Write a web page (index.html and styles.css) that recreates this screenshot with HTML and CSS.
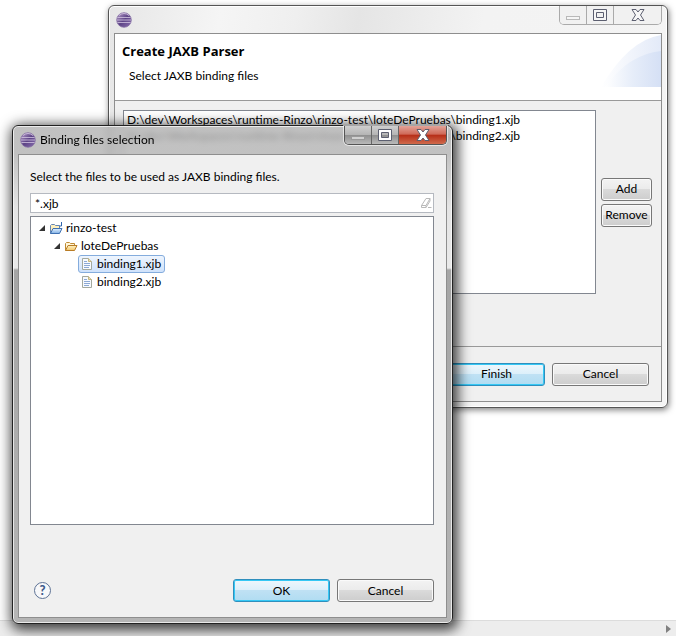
FILE: index.html
```html
<!DOCTYPE html>
<html lang="en">
<head>
<meta charset="utf-8">
<title>Create JAXB Parser</title>
<link rel="stylesheet" href="styles.css">
</head>
<body>
<svg class="defs" aria-hidden="true">
  <defs>
    <linearGradient id="orb" x1="0" y1="0" x2="1" y2="1">
      <stop offset="0" stop-color="#b9a0cc"/><stop offset=".5" stop-color="#5d4486"/><stop offset="1" stop-color="#8a6fb0"/>
    </linearGradient>
    <linearGradient id="folder" x1="0" y1="0" x2="0" y2="1">
      <stop offset="0" stop-color="#fff3c4"/><stop offset="1" stop-color="#f3c66b"/>
    </linearGradient>
    <linearGradient id="project" x1="0" y1="0" x2="0" y2="1">
      <stop offset="0" stop-color="#e4f1ff"/><stop offset="1" stop-color="#7fb0e4"/>
    </linearGradient>
    <linearGradient id="arcOuter"><stop offset="0" stop-color="#fff"/><stop offset="1" stop-color="#e3eaf8"/></linearGradient>
    <linearGradient id="arcInner"><stop offset="0" stop-color="#fff"/><stop offset=".5" stop-color="#e6edf9"/><stop offset="1" stop-color="#d5e0f5"/></linearGradient>
    <symbol id="app" viewBox="0 0 16 16">
      <circle cx="8" cy="8" r="7.3" fill="url(#orb)" stroke="#8771a4" stroke-width=".8"/>
      <path d="M1.5 5.5h13M.9 8h14.2M1.5 10.5h13" stroke="#d3c5e2" stroke-width=".8"/>
      <path d="M3 3.5Q8-.5 13 3.5" fill="none" stroke="#c9b8d9" stroke-width="1"/>
    </symbol>
    <symbol id="file" viewBox="0 0 12 14">
      <path d="M1.5 1.5h6l3 3v8h-9z" fill="#f7faff" stroke="#a3a99f"/>
      <path d="M7.5 1.5v3h3" fill="#f0e0ac" stroke="#c5b67f"/>
      <path d="M3 4.500h3M3 6.500h6M3 8.500h6M3 10.500h5" stroke="#7f9fd0" stroke-width=".9"/>
    </symbol>
    <symbol id="min" viewBox="0 0 16 14"><rect x="1.500" y="8.500" width="13" height="3"/></symbol>
    <symbol id="max" viewBox="0 0 16 14"><path fill-rule="evenodd" d="M1.500 1.500h13v11h-13zM4.500 4.500h7v5h-7z"/></symbol>
    <symbol id="close" viewBox="0 0 16 14"><path d="M2 1.500h4L8 4l2-2.500h4L10.500 7l3.500 5.500h-4L8 10l-2 2.500H2L5.500 7z"/></symbol>
  </defs>
</svg>

<main class="desktop">
  <section class="window wizard" aria-labelledby="wizard-title">
    <div class="titlebar">
      <svg class="app-icon" aria-hidden="true"><use href="#app"/></svg>
      <div class="caption">
        <button type="button" aria-label="Minimize" disabled><svg><use href="#min"/></svg></button>
        <button type="button" aria-label="Maximize"><svg><use href="#max"/></svg></button>
        <button type="button" class="close" aria-label="Close"><svg><use href="#close"/></svg></button>
      </div>
    </div>
    <div class="client">
      <header class="banner">
        <div>
          <h1 id="wizard-title">Create JAXB Parser</h1>
          <p>Select JAXB binding files</p>
        </div>
        <svg class="arc" viewBox="0 0 60 52" aria-hidden="true">
          <path d="M0 52Q28 5 60 0V52z" fill="url(#arcOuter)"/>
          <path d="M4 52Q28 19 60 16V52z" fill="url(#arcInner)"/>
        </svg>
      </header>
      <div class="files">
        <ul class="listbox">
          <li>D:\dev\Workspaces\runtime-Rinzo\rinzo-test\loteDePruebas\binding1.xjb</li>
          <li>D:\dev\Workspaces\runtime-Rinzo\rinzo-test\loteDePruebas\binding2.xjb</li>
        </ul>
        <div class="side">
          <button type="button" class="btn">Add</button>
          <button type="button" class="btn">Remove</button>
        </div>
      </div>
      <footer class="actions">
        <button type="button" class="btn wide default">Finish</button>
        <button type="button" class="btn wide">Cancel</button>
      </footer>
    </div>
  </section>

  <section class="window picker" aria-labelledby="picker-title">
    <div class="titlebar">
      <svg class="app-icon" aria-hidden="true"><use href="#app"/></svg>
      <h2 id="picker-title">Binding files selection</h2>
      <div class="caption">
        <button type="button" aria-label="Minimize" disabled><svg><use href="#min"/></svg></button>
        <button type="button" aria-label="Maximize"><svg><use href="#max"/></svg></button>
        <button type="button" class="close" aria-label="Close"><svg><use href="#close"/></svg></button>
      </div>
    </div>
    <div class="client">
      <label for="filter">Select the files to be used as JAXB binding files.</label>
      <div class="filter">
        <input id="filter" type="text" value="*.xjb">
        <button type="button" aria-label="Clear">
          <svg viewBox="0 0 12 12"><path d="M1.500 8.500L6 1.500h4L6 8.500zM1.500 8.500v2h4.500l4-6.500v-2.500M6 8.500v2M8 10.500h3.500" fill="none" stroke="#b9b9b9"/></svg>
        </button>
      </div>
      <ul class="tree" role="tree">
        <li class="level1" role="treeitem">
          <svg class="twisty" viewBox="0 0 6 6"><path d="M6 0v6H0z"/></svg>
          <svg class="folder" viewBox="0 0 14 13">
            <path d="M1.500 11.500v-8l1-1h3l1 1h4v3" fill="#fff0bd" stroke="#6586b4"/>
            <path d="M1.500 11.500l2.500-5h9l-2.500 5z" fill="url(#project)" stroke="#3f71b2"/>
            <path d="M12.500 0v4h-2" fill="none" stroke="#2f65ad"/>
          </svg>
          <span>rinzo-test</span>
        </li>
        <li class="level2" role="treeitem">
          <svg class="twisty" viewBox="0 0 6 6"><path d="M6 0v6H0z"/></svg>
          <svg class="folder" viewBox="0 0 14 13">
            <path d="M1.500 10.500v-7l1-1h3l1 1h4v2" fill="#fff7da" stroke="#c08b34"/>
            <path d="M1.500 10.500l2.500-5h9l-2.500 5z" fill="url(#folder)" stroke="#b97c25"/>
          </svg>
          <span>loteDePruebas</span>
        </li>
        <li class="level3" role="treeitem" aria-selected="true">
          <span class="item selected"><svg class="file"><use href="#file"/></svg>binding1.xjb</span>
        </li>
        <li class="level3" role="treeitem">
          <span class="item"><svg class="file"><use href="#file"/></svg>binding2.xjb</span>
        </li>
      </ul>
      <footer class="actions">
        <button type="button" class="help" aria-label="Help">?</button>
        <button type="button" class="btn wide default">OK</button>
        <button type="button" class="btn wide">Cancel</button>
      </footer>
    </div>
  </section>
  <div class="scrollbar"><svg viewBox="0 0 5 8" aria-hidden="true"><path d="M0 0l5 4-5 4z"/></svg></div>
</main>
</body>
</html>
```
FILE: styles.css
```css
* { box-sizing: border-box; }
body {
  margin: 0;
  background: #fff;
  color: #000;
  font: 12px/16px Lato, "Noto Sans", sans-serif;
}
h1, h2, p, ul { margin: 0; padding: 0; }
ul { list-style: none; }
button, input { font: inherit; color: inherit; }
button { padding: 0; }
svg { display: block; flex: none; }
.defs { position: absolute; width: 0; height: 0; }

.desktop {
  position: relative;
  display: flex;
  flex-direction: column;
  justify-content: flex-end;
  min-height: 100vh;
  overflow: hidden;
}
.scrollbar {
  display: flex;
  align-items: center;
  justify-content: flex-end;
  height: 16px;
  padding-right: 5px;
  border-top: 1px solid #dcdcdc;
  background: #ededed;
}
.scrollbar svg { width: 5px; height: 8px; fill: #808080; }

/* Windows */
.window {
  position: absolute;
  display: flex;
  flex-direction: column;
  border: 1px solid #555;
  border-radius: 6px;
  padding: 0 5px 5px;
}
.wizard {
  inset: 5px 8px 228px 108px;
  background: linear-gradient(100deg, #e6e6e6 0%, #f5f5f5 18%, #efefef 30%, #e5e5e5 40%, #f3f3f3 60%, #f4f4f4 100%);
  box-shadow: inset 0 0 0 1px #fff, 1px 2px 6px rgba(0, 0, 0, .5);
}
.picker {
  inset: 125px 223px 12px 12px;
  border-color: #222;
  background: linear-gradient(rgba(178, 178, 178, .8) 0, rgba(178, 178, 178, .8) 28px, #e4e4e4 80px, #e9e9e9 142px, #a5a5a5 144px, #b5b5b5 100%);
  backdrop-filter: blur(3px);
  box-shadow: inset 0 0 0 1px rgba(255, 255, 255, .7), 2px 3px 13px 3px rgba(0, 0, 0, .75);
}
.titlebar {
  display: flex;
  align-items: center;
  gap: 4px;
  height: 27px;
  padding-left: 2px;
}
.picker .titlebar { height: 28px; }
.titlebar h2 { font-size: 12px; font-weight: 400; }
.app-icon { width: 16px; height: 16px; }
.client {
  display: flex;
  flex: 1;
  flex-direction: column;
  min-height: 0;
  border: 1px solid #8e8e8e;
  background: #f0f0f0;
}

/* Caption buttons */
.caption {
  display: flex;
  align-self: flex-start;
  margin-left: auto;
  border: 1px solid #aaa;
  border-top: 0;
  border-radius: 0 0 5px 5px;
  overflow: hidden;
}
.caption button {
  display: flex;
  align-items: center;
  justify-content: center;
  width: 27px;
  height: 18px;
  border: 0;
  border-right: 1px solid #aaa;
  background: #f1f1f1;
}
.caption .close { width: 47px; border-right: 0; }
.caption svg { width: 16px; height: 14px; fill: #f6f6f6; stroke: #5c5f70; }
.caption button:disabled svg { stroke: #b9b9b9; }
.picker .caption { border-color: #555; box-shadow: 0 0 0 1px rgba(255, 255, 255, .6); }
.picker .caption button {
  border-color: #666;
  background: linear-gradient(#cfcfcf 0, #b5b5b5 48%, #8e8e8e 50%, #bababa 100%);
}
.picker .caption .close { background: linear-gradient(#e3a398 0, #cf6857 46%, #b62d17 50%, #d06a4c 100%); }
.picker .caption svg { fill: #fff; }
.picker .caption button:disabled svg { fill: #d0d0d0; stroke: #999; }

/* Push buttons */
.btn {
  height: 23px;
  border: 1px solid #777;
  border-radius: 3px;
  background: linear-gradient(#f3f3f3 0, #ebebeb 48%, #dadada 50%, #cdcdcd 100%);
  box-shadow: inset 0 0 0 1px #fafafa;
}
.btn.wide { width: 97px; }
.btn.default {
  border-color: #2f8fbd;
  background: linear-gradient(#eef7fc 0, #dceffa 48%, #bfe1f4 50%, #b0dcf2 100%);
  box-shadow: inset 0 0 0 1px #35c8f5;
}
.actions { display: flex; align-items: center; justify-content: flex-end; gap: 7px; }

/* Wizard */
.banner {
  display: flex;
  justify-content: space-between;
  height: 67px;
  padding-left: 7px;
  border-bottom: 1px solid #999;
  background: #fff;
}
.banner h1 { margin-top: 8px; font: bold 13px/18px "Open Sans", "Noto Sans", sans-serif; }
.banner p { margin: 8px 0 0 7px; }
.arc { width: 60px; height: 52px; margin-top: 1px; }
.files {
  display: flex;
  flex: 1;
  gap: 5px;
  padding: 9px 9px 52px 8px;
}
.listbox {
  flex: 1;
  padding: 1px 3px;
  border: 1px solid #828790;
  background: #fff;
  white-space: nowrap;
}
.side {
  display: flex;
  flex-direction: column;
  justify-content: center;
  gap: 3px;
  width: 51px;
}
.wizard .actions { height: 55px; padding-right: 12px; border-top: 1px solid #999; }

/* File picker */
.picker .client { padding: 13px 12px 15px 11px; }
.picker label { line-height: 18px; }
.filter {
  display: flex;
  align-items: center;
  height: 20px;
  margin: 7px 0 3px;
  border: 1px solid #b5b9c0;
  background: #fff;
}
.filter input {
  flex: 1;
  min-width: 0;
  height: 18px;
  padding: 0 4px;
  border: 0;
  background: none;
  outline: 0;
}
.filter button { border: 0; margin-right: 1px; background: none; }
.filter svg { width: 12px; height: 12px; }
.tree {
  flex: 1;
  padding: 2px 8px;
  border: 1px solid #828790;
  background: #fff;
}
.tree li { display: flex; align-items: center; height: 18px; }
.level2 { padding-left: 15px; }
.level3 { padding-left: 39px; }
.twisty { width: 6px; height: 6px; margin-right: 4px; fill: #333; }
.folder { width: 14px; height: 13px; margin-right: 3px; }
.file { width: 12px; height: 14px; }
.item {
  display: flex;
  align-items: center;
  gap: 4px;
  height: 18px;
  padding: 0 3px 0 2px;
  border: 1px solid transparent;
  border-radius: 3px;
}
.item.selected { border-color: #84acdd; background: linear-gradient(#eef5fe, #cfe2fb); }
.picker .actions { margin-top: 54px; }
.help {
  width: 17px;
  height: 17px;
  margin: 0 auto 0 4px;
  border: 1px solid #5d7295;
  border-radius: 50%;
  background: #f7f8fa;
  color: #3f5d8c;
  font-size: 13px;
  font-weight: 900;
  line-height: 15px;
}
```
